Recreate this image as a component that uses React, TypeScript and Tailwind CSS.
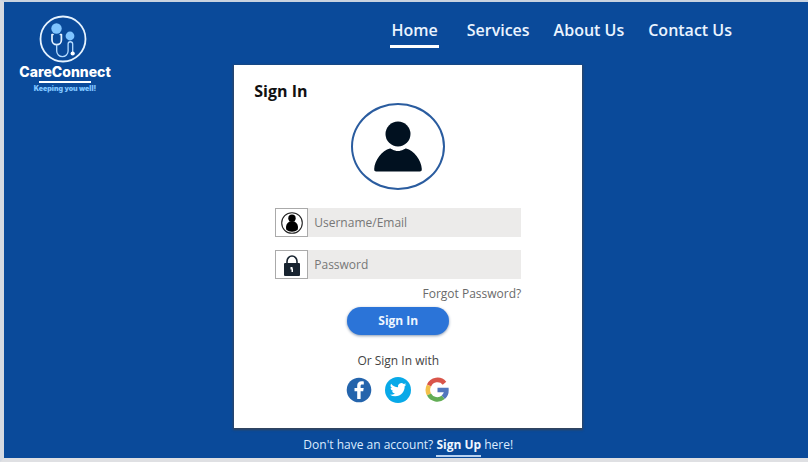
import React from "react";

const NAV_ITEMS = ["Home", "Services", "About Us", "Contact Us"];

function Logo() {
  return (
    <a href="#" className="col-start-1 row-span-2 row-start-1 flex w-[94px] flex-col items-center self-start ml-[14px] mt-[13px]">
      <svg viewBox="0 0 48 48" className="mr-1 h-12 w-12" fill="none" aria-hidden="true">
        <circle cx="24" cy="24" r="22.5" stroke="#e6f3ff" strokeWidth="1.8" />
        <circle cx="17.500" cy="13.500" r="5.200" fill="#7fc4ff" />
        <circle cx="31" cy="21" r="4.400" fill="#7fc4ff" />
        <path d="M14 19.500h-1v5.500a4.700 4.700 0 0 0 9.400 0v-5.500h-1" stroke="#e6f3ff" strokeWidth="1.700" strokeLinecap="round" strokeLinejoin="round" />
        <path d="M17.700 30v6a5.700 5.700 0 0 0 11.400 0v-7c0-3 4.400-3 4.600 0v8" stroke="#b5dcff" strokeWidth="1.300" strokeLinecap="round" />
        <circle cx="33.700" cy="38.500" r="2.100" fill="#ffffff" />
      </svg>
      <span className="font-[Inter,sans-serif] text-[14px] leading-[18px] font-extrabold text-white">CareConnect</span>
      <span className="h-[2px] w-[52px] bg-white" />
      <span className="mt-[1px] font-[Inter,sans-serif] text-[7px] leading-[10px] font-black whitespace-nowrap text-[#7fc4ff]">Keeping you well!</span>
    </a>
  );
}

function PersonShape() {
  return (
    <svg viewBox="0 0 48 52" className="h-[52px] w-12" fill="#011120" aria-hidden="true">
      <circle cx="24" cy="13" r="12.500" />
      <path d="M16 27.500c1.500 0 3.500 2.500 8 2.500s6.500-2.500 8-2.500c8 1.500 15.500 12 15.800 20.500 0 1.800-.6 2.500-2 2.500H2.200c-1.400 0-2-.7-2-2.500C.5 39.500 8 29 16 27.500z" />
    </svg>
  );
}

function UserIcon() {
  return (
    <svg viewBox="0 0 24 24" className="h-6 w-6" aria-hidden="true">
      <circle cx="12" cy="12" r="10.300" fill="none" stroke="#222" strokeWidth="1.100" />
      <circle cx="12" cy="7.300" r="3.700" fill="#000" />
      <path d="M9.500 10.500h5c3 1.500 4 4.500 3.300 8-3.200 3-8.400 3-11.600 0-.7-3.500.3-6.500 3.300-8z" fill="#000" />
    </svg>
  );
}

function LockIcon() {
  return (
    <svg viewBox="0 0 24 24" className="h-6 w-6" aria-hidden="true">
      <path d="M7 11V8.500a5 5.500 0 0 1 10 0V11" fill="none" stroke="#182430" strokeWidth="1.600" />
      <rect x="4" y="10" width="16" height="13" rx="1" fill="#182430" />
      <path d="M10.500 14h2v1.500h.5V19h-1.500v-2.500h-1z" fill="#fff" />
    </svg>
  );
}

function Field({ id, label, type, icon }: { id: string; label: string; type: string; icon: React.ReactNode }) {
  return (
    <div className="flex h-[29px] bg-[#ecebea]">
      <label htmlFor={id} aria-label={label} className="flex w-[33px] shrink-0 items-center justify-center border border-[#aaa] bg-white">
        {icon}
      </label>
      <input
        id={id}
        type={type}
        placeholder={label}
        className="min-w-0 flex-1 px-[6px] text-[12px] text-[#444] outline-none placeholder:text-[#777]"
      />
    </div>
  );
}

function SocialButtons() {
  return (
    <div className="mt-[6px] flex items-center justify-center gap-[13px]">
      <button type="button" aria-label="Facebook">
        <svg viewBox="0 0 26 26" className="h-[26px] w-[26px]">
          <circle cx="13" cy="13" r="12.300" fill="#2464ac" />
          <path d="M11.200 22v-7.700H8.500v-3.200h2.700V8.800c0-3 1.700-4.600 4.400-4.600.9 0 1.800.1 2.200.2v3h-1.600c-1.300 0-1.600.7-1.600 1.600v2.100h3.100l-.5 3.200h-2.600V22z" fill="#fff" />
        </svg>
      </button>
      <button type="button" aria-label="Twitter">
        <svg viewBox="0 0 26 26" className="h-[26px] w-[26px]">
          <circle cx="13" cy="13" r="13" fill="#08a9e8" />
          <path transform="translate(5 4.500) scale(.68)" d="M23.950 4.570a10 10 0 0 1-2.820.77 4.960 4.960 0 0 0 2.160-2.720c-.95.550-2 .960-3.130 1.180a4.920 4.920 0 0 0-8.380 4.480C7.690 8.100 4.070 6.130 1.640 3.160a4.920 4.920 0 0 0 1.520 6.570 4.900 4.900 0 0 1-2.230-.61v.06c0 2.380 1.700 4.370 3.950 4.820a5 5 0 0 1-2.210.09 4.940 4.940 0 0 0 4.600 3.420A9.870 9.870 0 0 1 0 19.540a13.990 13.990 0 0 0 7.560 2.210c9.050 0 14-7.500 14-13.980 0-.21 0-.42-.02-.63a9.940 9.940 0 0 0 2.460-2.550z" fill="#fff" />
        </svg>
      </button>
      <button type="button" aria-label="Google">
        <svg viewBox="0 0 26 26" className="h-[26px] w-[26px]" fill="none" strokeWidth="4.600">
          <path d="M20.500 6.200A9.200 9.200 0 0 0 5 8.500" stroke="#d9554a" />
          <path d="M5 8.500a9.500 9.500 0 0 0 0 9" stroke="#f3c04a" />
          <path d="M5 17.500a9.500 9.500 0 0 0 14.300 2.800" stroke="#62ad55" />
          <path d="M19.300 20.300A9.300 9.300 0 0 0 22.400 13H13.500" stroke="#5276bd" />
        </svg>
      </button>
    </div>
  );
}

export default function App() {
  return (
    <div className="flex min-h-screen flex-col border-t-2 border-b-4 border-l-4 border-t-[#c9d3e0] border-b-[#dfe0e3] border-l-[#d5dae2] bg-[#0a4a9a] font-['Open_Sans','Noto_Sans',sans-serif]">
      <div className="grid flex-1 grid-cols-[minmax(0,51fr)_348px_minmax(0,50fr)] grid-rows-[63px_auto_auto] content-start">
        <Logo />
        <nav className="col-span-2 col-start-2 row-start-1 flex items-start justify-end gap-6 pt-4 pr-[76px]">
          {NAV_ITEMS.map((item) => (
            <a
              key={item}
              href="#"
              className={
                item === "Home"
                  ? "mr-1 border-b-3 border-white px-px pb-[3px] text-[16px] leading-6 font-semibold text-[#eaf4ff]"
                  : "text-[16px] leading-6 font-semibold text-[#eaf4ff]"
              }
            >
              {item}
            </a>
          ))}
        </nav>

        <main className="col-start-2 row-start-2 bg-white pt-[14px] pr-10 pb-[25px] pl-5 shadow-[0_1px_2px_1px_#34445c]">
          <h1 className="text-[16px] leading-6 font-bold text-[#111]">Sign In</h1>
          <div className="mx-auto flex h-[87px] w-[94px] items-center justify-center rounded-[50%] border-2 border-[#2a5c9f]">
            <PersonShape />
          </div>
          <form className="mx-auto mt-[18px] flex w-[246px] flex-col" onSubmit={(e) => e.preventDefault()}>
            <div className="flex flex-col gap-[13px]">
              <Field id="username" label="Username/Email" type="text" icon={<UserIcon />} />
              <Field id="password" label="Password" type="password" icon={<LockIcon />} />
            </div>
            <a href="#" className="mt-[5px] self-end text-[12px] leading-5 text-[#6a6a6a]">Forgot Password?</a>
            <button type="submit" className="mt-[3px] h-7 w-[102px] self-center rounded-full bg-[#2b74d8] text-[12px] font-bold text-[#eef6ff] shadow-[0_1px_3px_#8899b0]">
              Sign In
            </button>
          </form>
          <p className="mt-4 text-center text-[12px] leading-5 text-[#444]">Or Sign In with</p>
          <SocialButtons />
        </main>

        <p className="col-start-2 row-start-3 mt-[7px] text-center text-[12px] leading-5 text-[#dcecff]">
          Don't have an account?{" "}
          <a href="#" className="inline-block border-b-2 border-[#b9d2f0] font-bold text-[#eef6ff]">Sign Up</a> here!
        </p>
      </div>
    </div>
  );
}
